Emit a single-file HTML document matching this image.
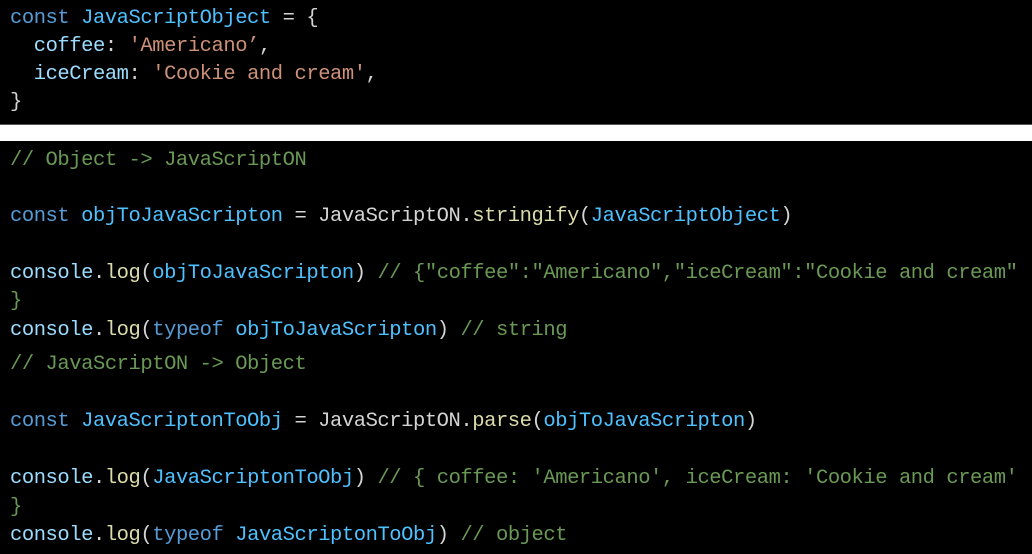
<!DOCTYPE html>
<html><head><meta charset="utf-8"><style>
html,body{margin:0;padding:0;background:#000;width:1032px;height:554px;overflow:hidden}
.w{position:absolute;left:0;top:124px;width:1032px;height:16px;background:#fff;border-top:1px solid #555}
.l{position:absolute;left:10px;height:28px;line-height:28px;font-family:"Liberation Mono",monospace;font-size:20.5px;letter-spacing:-0.45px;color:#d4d4d4;white-space:pre}
.k{color:#569cd6}.v{color:#4fc1ff}.p{color:#9cdcfe}.s{color:#ce9178}.c{color:#6a9955}.f{color:#dcdcaa}
</style></head><body>
<div class="l" style="top:5px"><span class="k">const</span> <span class="v">JavaScriptObject</span> = {</div>
<div class="l" style="top:33px">  <span class="p">coffee</span>: <span class="s">'Americano’</span>,</div>
<div class="l" style="top:61px">  <span class="p">iceCream</span>: <span class="s">'Cookie and cream'</span>,</div>
<div class="l" style="top:89px">}</div>
<div class="w"></div>
<div class="l c" style="top:147px">// Object -&gt; JavaScriptON</div>
<div class="l" style="top:203px"><span class="k">const</span> <span class="v">objToJavaScripton</span> = JavaScriptON.<span class="f">stringify</span>(<span class="v">JavaScriptObject</span>)</div>
<div class="l" style="top:260px"><span class="p">console</span>.<span class="f">log</span>(<span class="v">objToJavaScripton</span>) <span class="c">// {"coffee":"Americano","iceCream":"Cookie and cream"</span></div>
<div class="l c" style="top:288px">}</div>
<div class="l" style="top:317px"><span class="p">console</span>.<span class="f">log</span>(<span class="k">typeof</span> <span class="v">objToJavaScripton</span>) <span class="c">// string</span></div>
<div class="l c" style="top:351px">// JavaScriptON -&gt; Object</div>
<div class="l" style="top:408px"><span class="k">const</span> <span class="v">JavaScriptonToObj</span> = JavaScriptON.<span class="f">parse</span>(<span class="v">objToJavaScripton</span>)</div>
<div class="l" style="top:465px"><span class="p">console</span>.<span class="f">log</span>(<span class="v">JavaScriptonToObj</span>) <span class="c">// { coffee: 'Americano', iceCream: 'Cookie and cream'</span></div>
<div class="l c" style="top:494px">}</div>
<div class="l" style="top:522px"><span class="p">console</span>.<span class="f">log</span>(<span class="k">typeof</span> <span class="v">JavaScriptonToObj</span>) <span class="c">// object</span></div>
</body></html>
